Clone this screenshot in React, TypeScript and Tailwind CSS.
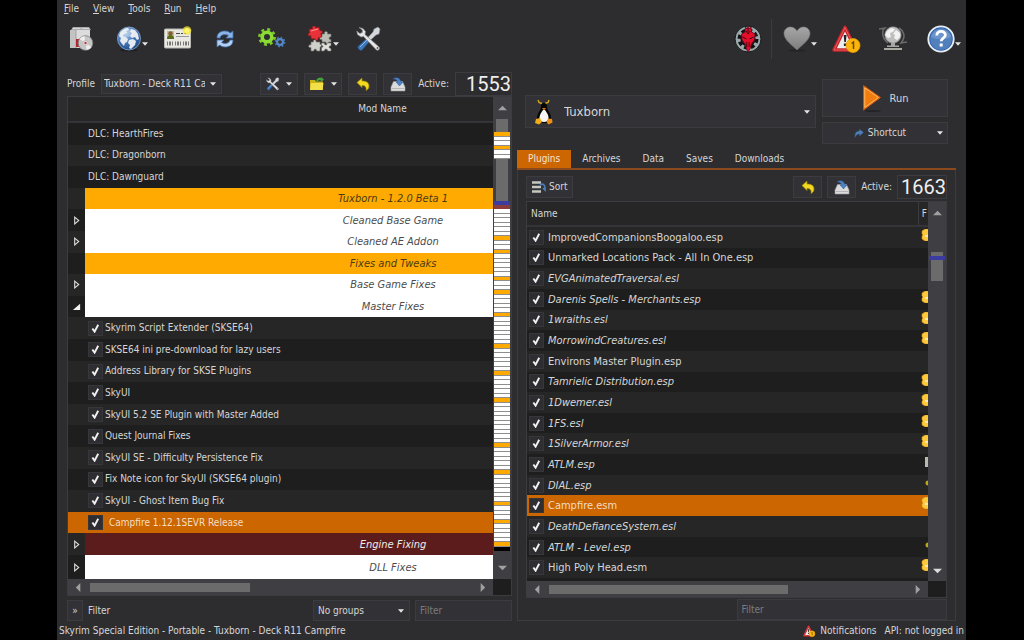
import React from 'react';
import clsx from 'clsx';

type Mod = {
  name: string;
  kind: 'dlc' | 'mod' | 'separator';
  tone?: 'orange' | 'white' | 'red';
  tree?: 'closed' | 'open';
  selected?: boolean;
};

const mods: Mod[] = [
  { name: 'DLC: HearthFires', kind: 'dlc' },
  { name: 'DLC: Dragonborn', kind: 'dlc' },
  { name: 'DLC: Dawnguard', kind: 'dlc' },
  { name: 'Tuxborn - 1.2.0 Beta 1', kind: 'separator', tone: 'orange' },
  { name: 'Cleaned Base Game', kind: 'separator', tone: 'white', tree: 'closed' },
  { name: 'Cleaned AE Addon', kind: 'separator', tone: 'white', tree: 'closed' },
  { name: 'Fixes and Tweaks', kind: 'separator', tone: 'orange' },
  { name: 'Base Game Fixes', kind: 'separator', tone: 'white', tree: 'closed' },
  { name: 'Master Fixes', kind: 'separator', tone: 'white', tree: 'open' },
  { name: 'Skyrim Script Extender (SKSE64)', kind: 'mod' },
  { name: 'SKSE64 ini pre-download for lazy users', kind: 'mod' },
  { name: 'Address Library for SKSE Plugins', kind: 'mod' },
  { name: 'SkyUI', kind: 'mod' },
  { name: 'SkyUI 5.2 SE Plugin with Master Added', kind: 'mod' },
  { name: 'Quest Journal Fixes', kind: 'mod' },
  { name: 'SkyUI SE - Difficulty Persistence Fix', kind: 'mod' },
  { name: 'Fix Note icon for SkyUI (SKSE64 plugin)', kind: 'mod' },
  { name: 'SkyUI - Ghost Item Bug Fix', kind: 'mod' },
  { name: 'Campfire 1.12.1SEVR Release', kind: 'mod', selected: true },
  { name: 'Engine Fixing', kind: 'separator', tone: 'red', tree: 'closed' },
  { name: 'DLL Fixes', kind: 'separator', tone: 'white', tree: 'closed' },
];

type Plugin = { name: string; italic?: boolean; flag?: 'coin' | 'page' | 'dot'; selected?: boolean };

const plugins: Plugin[] = [
  { name: 'ImprovedCompanionsBoogaloo.esp', flag: 'coin' },
  { name: 'Unmarked Locations Pack - All In One.esp' },
  { name: 'EVGAnimatedTraversal.esl', italic: true },
  { name: 'Darenis Spells - Merchants.esp', italic: true, flag: 'coin' },
  { name: '1wraiths.esl', italic: true, flag: 'coin' },
  { name: 'MorrowindCreatures.esl', italic: true, flag: 'coin' },
  { name: 'Environs Master Plugin.esp' },
  { name: 'Tamrielic Distribution.esp', italic: true, flag: 'coin' },
  { name: '1Dwemer.esl', italic: true, flag: 'coin' },
  { name: '1FS.esl', italic: true, flag: 'coin' },
  { name: '1SilverArmor.esl', italic: true, flag: 'coin' },
  { name: 'ATLM.esp', italic: true, flag: 'page' },
  { name: 'DIAL.esp', italic: true, flag: 'dot' },
  { name: 'Campfire.esm', flag: 'coin', selected: true },
  { name: 'DeathDefianceSystem.esl', italic: true },
  { name: 'ATLM - Level.esp', italic: true, flag: 'dot' },
  { name: 'High Poly Head.esm', flag: 'coin' },
];

// separators shown as orange bands in the mod list scrollbar
const orangeBands = [6, 9, 15, 18, 23, 30, 36, 42, 52, 58, 65, 69, 74];

const Caret = ({ className }: { className?: string }) => (
  <svg viewBox="0 0 6 4" className={clsx('h-1 w-1.5 shrink-0 pointer-events-none', className)}>
    <path d="M0 0.3h6L3 3.8z" fill="#e4e4e4" />
  </svg>
);

const Arrow = ({ dir, light }: { dir: 'up' | 'down' | 'left' | 'right'; light?: boolean }) => {
  const d = {
    up: 'M5 2l5 5H0z',
    down: 'M5 8l5-5H0z',
    left: 'M2 5l5-5v10z',
    right: 'M8 5L3 0v10z',
  }[dir];
  return (
    <svg viewBox="0 0 10 10" className="size-[9px]">
      <path d={d} fill={light ? '#dcdcdc' : '#a0a0a0'} />
    </svg>
  );
};

const InstallIcon = () => (
  <svg viewBox="0 0 26 26" className="size-[26px]">
    <path d="M3 4l2-3h16l2 3z" fill="#a9a9a9" />
    <path d="M4.500 2.500h8M14 2.500h7" stroke="#d6d6d6" />
    <path d="M2 4h20v18H2z" fill="#dcdcdc" />
    <path d="M2 4h6v18H2z" fill="#c3c3c3" />
    <path d="M8 4v18" stroke="#8f8f8f" strokeWidth=".7" />
    <path d="M8 13h5v8H8z" fill="#b3242c" />
    <circle cx="17.500" cy="17" r="7.300" fill="#c6c6c6" stroke="#7b7b7b" strokeWidth=".8" />
    <path d="M17.500 17l-6-4a7 7 0 0 1 5-3zM17.500 17l6 4a7 7 0 0 1-5 3z" fill="#ededed" />
    <circle cx="17.500" cy="17" r="2.600" fill="#f0e3e3" stroke="#aaa" strokeWidth=".6" />
    <circle cx="17.500" cy="17" r="1.200" fill="#a83a42" />
  </svg>
);

const GlobeIcon = () => (
  <svg viewBox="0 0 26 26" className="size-[26px]">
    <defs>
      <radialGradient id="sea" cx=".35" cy=".25" r=".8">
        <stop offset="0" stopColor="#a9c8ee" />
        <stop offset=".55" stopColor="#4577b8" />
        <stop offset="1" stopColor="#1f4684" />
      </radialGradient>
    </defs>
    <ellipse cx="13" cy="24" rx="9" ry="1.500" fill="#1e1e20" />
    <circle cx="13" cy="12.500" r="11.500" fill="url(#sea)" stroke="#89a7cf" strokeWidth=".8" />
    <path d="M4 7c2-3 5-5 8-5l1 2-3 1 1 2-3 1-1 2 3 1 2 2-1 3-2 1-1 3c-2-2-3-4-4-5l1-3-2-2zM15 3l4 1 3 4 1 5-2 1-2-3-3 1-2-2 2-3-2-1zM13 14l4-1 3 2-1 4-4 4-2-1 1-3-2-2z" fill="#e4eaf0" />
    <ellipse cx="11" cy="7" rx="7" ry="4" fill="#fff" opacity=".25" />
  </svg>
);

const CardIcon = () => (
  <svg viewBox="0 0 28 26" className="h-[26px] w-7">
    <rect x=".5" y="3" width="26" height="19" rx="1" fill="#e9e8e2" stroke="#b9b9b3" />
    <path d="M3 5h7v8H3z" fill="#b7c29b" />
    <circle cx="6.500" cy="7.500" r="2.200" fill="#8a5a2b" />
    <path d="M3 13c0-3 1.500-4 3.500-4s3.500 1 3.500 4z" fill="#5c6e1b" />
    <path d="M12 7.500h10" stroke="#494949" strokeWidth="1.200" strokeDasharray="4 1 2 1" />
    <path d="M12 10.500h13" stroke="#9a9a9a" />
    <path d="M3 17.500h22" stroke="#777" strokeWidth="4" strokeDasharray="1 1 2 1 1 2" />
    <circle cx="23" cy="4.500" r="4.300" fill="#f5e52a" opacity=".75" />
    <circle cx="23" cy="4.500" r="2.400" fill="#fff56b" />
  </svg>
);

const RefreshIcon = () => (
  <svg viewBox="0 0 18 18" className="size-[18px]">
    <path d="M1 8c0-5 3.500-7 8-7 2.500 0 4 .8 5.200 2L17 1v7h-7l2.400-2.400C10 4 5 4 4 8z" fill="#8ab4e6" stroke="#3e6fb0" strokeWidth=".8" />
    <path d="M17 10c0 5-3.500 7-8 7-2.500 0-4-.8-5.200-2L1 17v-7h7l-2.400 2.400C8 14 13 14 14 10z" fill="#b5d0f0" stroke="#3e6fb0" strokeWidth=".8" />
  </svg>
);

const GearsIcon = () => (
  <svg viewBox="0 0 28 22" className="h-[22px] w-7">
    <circle cx="9" cy="9" r="7.600" fill="none" stroke="#7ecb29" strokeWidth="2.600" strokeDasharray="2.900 3.068" />
    <circle cx="9" cy="9" r="4.800" fill="none" stroke="#8bdc35" strokeWidth="3.600" />
    <circle cx="22" cy="14" r="4.500" fill="none" stroke="#4679b4" strokeWidth="1.800" strokeDasharray="1.700 1.834" />
    <circle cx="22" cy="14" r="2.900" fill="none" stroke="#5487c2" strokeWidth="2.200" />
  </svg>
);

const PuzzleIcon = () => (
  <svg viewBox="0 0 26 26" className="size-[26px]">
    <path
      d="M15 8h2.500c-1-3.500 4-3.500 3 0H24v3c-2.500-1-2.500 3.500 0 2.500V16h-2.500c1 2.500-3.500 2.500-2.500 0H15v-2.500c-3 1-3-3.500 0-2.500z"
      fill="#bdbdb8"
      stroke="#6f6f6a"
      strokeWidth=".6"
    />
    <path
      d="M4 16h2.500c-1-3 3.500-3 2.500 0H13v2.500c2-1 2 3 0 2.500V25H9.500c1-2.500-3.500-2.500-2.500 0H4v-3.500c-3 1-3-3.500 0-2.500z"
      fill="#d0d0cb"
      stroke="#6f6f6a"
      strokeWidth=".6"
    />
    <path
      d="M14.500 17h3c-1 2.500 3.500 2.500 2.500 0h4v3c-2.500-1-2.500 3 0 2.500V25h-3.500c1-2.500-4-2.500-3 0h-3v-3.500c2 0 2-2.500 0-2z"
      fill="#e0e0dc"
      stroke="#6f6f6a"
      strokeWidth=".6"
    />
    <path
      d="M2 3.500l3.500-.8C4.500-.5 9-1 8.500 2l3.500-.8 1 3.800c2.500-1.500 3.500 2.500.8 2.500l.7 3.500-3.500.8c1 3-3.500 3.500-3 .8L4.500 13l-.8-3.500C1 11 .2 7 2.800 7z"
      fill="#e8323a"
      stroke="#a3141b"
      strokeWidth=".7"
    />
    <path d="M4 5l7-2" stroke="#ff9494" />
  </svg>
);

const ToolsIcon = ({ className }: { className: string }) => (
  <svg viewBox="0 0 26 26" className={className}>
    <path d="M24 3l-2-2-4 2-1 3-6.500 7 2.500 2.500L20 9l3-1z" fill="#d4d8dc" stroke="#858a90" strokeWidth=".6" />
    <path d="M10 13l3 3-7 8c-1 1.500-5-1.500-4-3.500z" fill="#3f78bd" stroke="#25558f" strokeWidth=".7" />
    <path d="M4 21l7-7" stroke="#8fb7e6" />
    <path d="M3 1.500l4 1 2.500 3-.5 3L23 21c1.500 2-1 4-2.500 3L7.500 10.500 5 11 1.500 8.500.8 5l3 2.500 2.500-1V4z" fill="#e6e6e6" stroke="#8a8a8a" strokeWidth=".7" />
    <circle cx="21.500" cy="22" r=".9" fill="#555" />
  </svg>
);

const SkyrimIcon = () => (
  <svg viewBox="0 0 28 28" className="size-7">
    <circle cx="14" cy="14" r="13" fill="#9ba9ab" stroke="#1a1a1a" />
    <circle cx="14" cy="14" r="8.600" fill="none" stroke="#111" strokeWidth="3.800" strokeDasharray="3.800 2.954" />
    <circle cx="14" cy="14" r="7.600" fill="#151515" />
    <path d="M14 1l1.500 3 1.500-2 .5 5 3.500 2-.5 6-3 4-1.500 5L14 27l-1.500-3-1.500-5-3-4-.5-6L11 7l.5-5L12.500 4z" fill="#e60f2b" stroke="#5c0a24" strokeWidth=".8" />
    <path d="M14 3v4M12 6l2 3 2-3M8.500 12l4 2M19.500 12l-4 2M12.800 17v5M15.200 17v5" stroke="#2d060c" strokeWidth=".9" fill="none" />
  </svg>
);

const HeartIcon = () => (
  <svg viewBox="0 0 28 26" className="h-[26px] w-7">
    <defs>
      <linearGradient id="heart" x1="0" y1="0" x2="0" y2="1">
        <stop offset="0" stopColor="#a6a6a6" />
        <stop offset="1" stopColor="#7e7e7e" />
      </linearGradient>
    </defs>
    <ellipse cx="14" cy="24.500" rx="9" ry="1.200" fill="#232325" />
    <path d="M14 24C9 19 1 14 1 7.500 1 3.500 4 1 7.500 1 10.500 1 13 3 14 5c1-2 3.500-4 6.500-4C24 1 27 3.500 27 7.500 27 14 19 19 14 24z" fill="url(#heart)" stroke="#777" strokeWidth=".6" />
  </svg>
);

const WarningIcon = ({ className }: { className: string }) => (
  <svg viewBox="0 0 30 28" className={className}>
    <path d="M14 2.500L25 25H3z" fill="#ececec" stroke="#c5242a" strokeWidth="3.600" strokeLinejoin="round" />
    <path d="M14 2.500L25 25H3z" fill="none" stroke="#ec6a6a" strokeWidth=".8" strokeLinejoin="round" />
    <path d="M12.700 10h2.800l-.6 7h-1.600zM12.900 18.500h2.400v2.400h-2.400z" fill="#222" />
    <circle cx="22" cy="20.500" r="7" fill="#fdb40c" stroke="#e89a00" strokeWidth=".8" />
    <path d="M20.500 18.500l2-1.500v7" stroke="#6b4a00" strokeWidth="1.500" fill="none" />
  </svg>
);

const GreyGlobeIcon = () => (
  <svg viewBox="0 0 28 26" className="h-[26px] w-7">
    <path d="M0 3l6-1-2 2c-1 5 1 10 5 13M28 16l-6 1 2-3c2-4 1-9-4-12" fill="none" stroke="#6c6c6c" strokeWidth="1.500" />
    <circle cx="14" cy="9" r="8.200" fill="#bdbdbd" stroke="#8c8c8c" strokeWidth=".6" />
    <path d="M8 5l4-3 4 1-2 3-3 1 1 4-3 1-3-3zM17 4l4 3v4l-3 3-3-2 1-3-2-1z" fill="#f2f2f2" />
    <path d="M12 17h4v3h-4z" fill="#a5a5a5" />
    <path d="M8 19.500h12V21H8zM5 22h18v2H5z" fill="#a9a9a4" />
  </svg>
);

const HelpIcon = () => (
  <svg viewBox="0 0 28 28" className="size-7">
    <circle cx="14" cy="14" r="12.700" fill="#2b62ab" stroke="#e9eef5" strokeWidth="1.800" />
    <circle cx="14" cy="14" r="10.800" fill="#5180bd" />
    <path d="M4 12a10.300 10.300 0 0 1 20 0c-6 3-14 3-20 0z" fill="#7ea2d2" opacity=".6" />
    <path d="M9.800 10.500c0-5.500 8.600-5.200 8.600-.5 0 3-4.200 3.200-4.200 6.200" fill="none" stroke="#fff" strokeWidth="2.800" />
    <path d="M12.700 18.500h3v3h-3z" fill="#fff" />
  </svg>
);

const FolderIcon = () => (
  <svg viewBox="0 0 16 14" className="h-3.5 w-4">
    <path d="M1 3h5l1 1.500h7V13H1z" fill="#c9b316" />
    <path d="M2 6h12.500l-1 7H1z" fill="#f1e04a" />
    <path d="M7 4c1-3 3-3.500 5-3V0l3 2.500L12 5V3.500C10 3 9 3.500 8.500 5z" fill="#3fa53c" />
  </svg>
);

const UndoIcon = () => (
  <svg viewBox="0 0 14 14" className="size-3.5">
    <path d="M1 5.500L6 1v3c5 0 7 2 7 5 0 2-1 3.500-3 4.500.6-3-.5-5-4-5v2z" fill="#f2d821" stroke="#9d8800" strokeWidth=".7" />
  </svg>
);

const BackupIcon = () => (
  <svg viewBox="0 0 16 16" className="size-4">
    <path d="M3.500 5.500h9L15 11v4H1v-4z" fill="#dcdcdc" stroke="#9a9a9a" strokeWidth=".6" />
    <path d="M2 12.500h12" stroke="#b5b5b5" />
    <path d="M3 3c3-2.500 7-1.500 8 3h2l-3.500 4L6 6h2C7 3.500 5 3 3 3z" fill="#4d82c4" stroke="#2f5f9e" strokeWidth=".5" />
  </svg>
);

const SortIcon = () => (
  <svg viewBox="0 0 16 14" className="h-3.5 w-4">
    <path d="M1 2.500h9M1 7h9M1 11.500h9" stroke="#c4c8c0" strokeWidth="2.400" />
    <path d="M9 5c3-2 5 0 5 3v2l-2-2" stroke="#4d7fbe" strokeWidth="1.600" fill="none" />
  </svg>
);

const TuxIcon = () => (
  <svg viewBox="0 0 18 26" className="h-[26px] w-[18px] shrink-0">
    <path d="M3 1l1 2.500 3 1M14 1l-1 2.500-3 1" stroke="#d8a714" strokeWidth="1.400" fill="none" />
    <path d="M6 7c0-4 6-4 6 0 0 5 4 7 4 12 0 3-2 5-7 5s-7-2-7-5c0-5 4-7 4-12z" fill="#050505" />
    <path d="M8 11h2c3 4 3.500 6 3.500 8S12 23 9 23s-4.500-2-4.500-4S5 15 8 11z" fill="#f6f6f6" />
    <path d="M7 9h4l-2 2.500z" fill="#e8750c" />
    <path d="M1 20l4-1 2 4-3 2.500L0 24z" fill="#f3ad17" />
    <path d="M17 20l-4-.5-1.500 3.500 2 2.500 4-2z" fill="#ee8f14" />
  </svg>
);

const RunIcon = () => (
  <svg viewBox="0 0 20 28" className="h-7 w-5">
    <ellipse cx="11" cy="27" rx="8" ry="1" fill="#242427" />
    <path d="M1.500 1.500L18.500 13.500 1.500 26z" fill="#f07d10" stroke="#c9530a" strokeLinejoin="round" />
    <path d="M2.800 4L16.500 13.500 2.800 23.500z" fill="none" stroke="#ffb766" />
  </svg>
);

const ShortcutIcon = () => (
  <svg viewBox="0 0 10 10" className="size-2.5">
    <path d="M1 9.500C.5 5 2.500 3 5.500 3V1L9.500 4.500 5.500 8V6C3.500 6 2 7 1 9.500z" fill="#4f7fb5" stroke="#2d5688" strokeWidth=".5" />
  </svg>
);

const ToolButton = ({ label, menu, children }: { label: string; menu?: boolean; children: React.ReactNode }) => (
  <button aria-label={label} className={clsx('flex h-full items-center justify-center', menu ? 'w-[50px] pl-1.5' : 'w-[47px]')}>
    {children}
    {menu && <Caret className="mt-2.5" />}
  </button>
);

const SmallButton = ({ label, menu, children }: { label: string; menu?: boolean; children: React.ReactNode }) => (
  <button
    aria-label={label}
    className={clsx(
      'flex h-[22px] items-center justify-center gap-1.5 border border-[#3b3b40] bg-[#323236]',
      menu ? 'w-[38px]' : 'w-[29px]',
    )}
  >
    {children}
    {menu && <Caret />}
  </button>
);

// four digit counter next to "Active:"
const Counter = ({ value, label, className }: { value: number; label: string; className: string }) => (
  <output
    aria-label={label}
    className={clsx(
      'flex h-6 items-center justify-end border border-[#3b3b40] bg-[#2d2d30] font-[Roboto,sans-serif] text-[20px] leading-none text-[#efefef]',
      className,
    )}
  >
    {value}
  </output>
);

const Check = ({ label }: { label: string }) => (
  <span className="grid size-[15px] shrink-0 place-items-center">
    <input
      type="checkbox"
      aria-label={label}
      defaultChecked
      className="peer col-start-1 row-start-1 size-[15px] appearance-none border border-[#37373b] bg-[#2e2e32]"
    />
    <svg viewBox="0 0 10 10" className="pointer-events-none col-start-1 row-start-1 hidden size-[9px] peer-checked:block">
      <path d="M1.500 5l2.500 3.500L8 .8" fill="none" stroke="#f2f2f2" strokeWidth="2.100" />
    </svg>
  </span>
);

const TreeArrow = ({ state }: { state: 'closed' | 'open' }) => (
  <svg viewBox="0 0 10 10" className="size-[9px]">
    {state === 'closed' ? (
      <path d="M3 1.200l4.500 3.800L3 8.800z" fill="none" stroke="#e0e0e0" strokeWidth="1.200" />
    ) : (
      <path d="M9 2v7H1z" fill="#f2f2f2" />
    )}
  </svg>
);

const HScroll = ({ size }: { size: string }) => (
  <div className="flex h-4 items-center bg-[#3f3f43]">
    <div className="flex flex-1 items-center gap-[7px] px-1.5">
      <Arrow dir="left" />
      <div className="flex-1">
        <div className={clsx('h-[9px] bg-[#6b6b6b]', size)} />
      </div>
      <Arrow dir="right" />
    </div>
    <div className="h-4 w-[18px] bg-[#1e1e1e]" />
  </div>
);

const Band = ({ orange }: { orange?: boolean }) => (
  <div className={clsx('flex-1 border-b border-[#8d8d8d]', orange ? 'bg-[#ffaa00]' : 'bg-white')} />
);

const ModScrollbar = () => (
  <div className="flex w-[18px] flex-col items-center bg-[#3f3f43]">
    <div className="flex h-[22px] items-center"><Arrow dir="up" /></div>
    <div className="h-[13px] w-3 bg-[#6b6b6b]" />
    <div className="flex h-[27px] w-4 flex-col">
      {[true, false, false, true, false, false].map((orange, i) => <Band key={i} orange={orange} />)}
    </div>
    <div className="h-[42px] w-3 bg-[#6b6b6b]" />
    <div className="h-1 w-4 bg-[#3c3ca0]" />
    <div className="h-1 w-4 bg-[#8c3b3b]" />
    <div className="flex w-4 flex-1 flex-col">
      {Array.from({ length: 75 }, (_, i) => <Band key={i} orange={orangeBands.includes(i)} />)}
    </div>
    <div className="h-1 w-4 bg-black" />
    <div className="flex h-7 items-center pt-1"><Arrow dir="down" /></div>
  </div>
);

const ModRow = ({ mod, index }: { mod: Mod; index: number }) => (
  <tr
    className={clsx(
      'flex min-h-0 items-stretch',
      mod.selected ? 'bg-[#cc6600] text-[#f3dcc4]' : index % 2 ? 'bg-[#262626]' : 'bg-[#1e1e1e]',
    )}
  >
    {mod.kind === 'separator' ? (
      <>
        <td className="flex w-[17px] items-center justify-center">{mod.tree && <TreeArrow state={mod.tree} />}</td>
        <td
          className={clsx(
            'flex flex-1 items-center justify-center pl-52 text-[11px] italic',
            mod.tone === 'orange' && 'bg-[#ffaa00] text-[#4a3a14]',
            mod.tone === 'white' && 'bg-white text-[#4c4c4c]',
            mod.tone === 'red' && 'bg-[#5c1c1c] text-[#ececec]',
          )}
        >
          {mod.name}
        </td>
      </>
    ) : (
      <td className={clsx('flex flex-1 items-center pl-5', mod.selected ? 'gap-1.5' : 'gap-0.5')}>
        {mod.kind === 'mod' && <Check label={mod.name} />}
        {mod.name}
      </td>
    )}
  </tr>
);

const Flag = ({ kind }: { kind: 'coin' | 'page' | 'dot' }) => (
  <svg viewBox="0 0 12 12" className="h-3 w-3 shrink-0">
    {kind === 'coin' && <path d="M6 0h6v12H6L3 10V7l1-1-1-1V2z" fill="#ffc93c" stroke="#c98c15" strokeWidth=".6" />}
    {kind === 'coin' && <path d="M6 6h6v2H6z" fill="#f8e6b8" />}
    {kind === 'page' && <path d="M6 1h6v10H6z" fill="#b9b9b4" />}
    {kind === 'dot' && <circle cx="9" cy="6" r="2.500" fill="#b8a81a" />}
  </svg>
);

const PluginRow = ({ plugin, index }: { plugin: Plugin; index: number }) => (
  <tr
    className={clsx(
      'flex min-h-0 items-stretch',
      plugin.selected ? 'bg-[#cc6600] text-[#f3dcc4]' : index % 2 ? 'bg-[#1e1e1e]' : 'bg-[#262626]',
    )}
  >
    <td className={clsx('flex flex-1 items-center gap-1 pl-0.5', plugin.italic && 'italic')}>
      <Check label={plugin.name} />
      {plugin.name}
    </td>
    <td className="flex w-[9px] overflow-hidden pt-0.5">{plugin.flag && <Flag kind={plugin.flag} />}</td>
  </tr>
);

const ModPane = () => (
  <section className="flex min-h-0 flex-col pt-[13px]">
    <div className="flex h-6 items-center gap-1.5">
      <label htmlFor="profile">Profile</label>
      <div className="flex flex-1">
        <div className="relative flex items-center">
          <select id="profile" className="h-5 w-[121px] appearance-none border border-[#3b3b40] bg-[#323236] pl-0.5 pr-4">
            <option>Tuxborn - Deck R11 Campfire</option>
          </select>
          <Caret className="absolute right-1.5" />
        </div>
      </div>
      <SmallButton label="Mod list options" menu><ToolsIcon className="size-3.5" /></SmallButton>
      <SmallButton label="Open folder" menu><FolderIcon /></SmallButton>
      <SmallButton label="Restore mod list"><UndoIcon /></SmallButton>
      <SmallButton label="Back up mod list"><BackupIcon /></SmallButton>
      <span>Active:</span>
      <Counter value={1553} label="Active mods" className="w-[57px]" />
    </div>

    <div className="flex min-h-0 flex-1 flex-col border border-[#3b3b40]">
      <div className="flex min-h-0 flex-1">
        <table className="flex flex-1 flex-col">
          <thead className="flex h-[26px] border-b-2 border-[#343438] bg-[#262626]">
            <tr className="flex flex-1">
              <th className="flex flex-1 items-center justify-center pl-51 font-normal">Mod Name</th>
            </tr>
          </thead>
          <tbody className="grid min-h-0 flex-1 grid-rows-[repeat(20,minmax(0,9fr))_minmax(0,10fr)]">
            {mods.map((mod, i) => <ModRow key={mod.name} mod={mod} index={i} />)}
          </tbody>
        </table>
        <ModScrollbar />
      </div>
      <HScroll size="w-[42%]" />
    </div>

    <div className="mt-1 flex h-[21px] items-stretch gap-[5px]">
      <button aria-label="Show filters" className="w-4 border border-[#3b3b40] bg-[#323236]">»</button>
      <label htmlFor="mod-filter" className="flex flex-1 items-center">Filter</label>
      <div className="relative flex items-center">
        <select aria-label="Groups" className="h-full w-[97px] appearance-none border border-[#3b3b40] bg-[#323236] pl-1">
          <option>No groups</option>
        </select>
        <Caret className="absolute right-1.5" />
      </div>
      <input
        id="mod-filter"
        placeholder="Filter"
        className="w-[97px] border border-[#3b3b40] bg-[#323236] px-1 placeholder:text-[#7c7c7c]"
      />
    </div>
  </section>
);

const tabs = ['Plugins', 'Archives', 'Data', 'Saves', 'Downloads'];

const PluginPane = () => (
  <section className="flex min-h-0 flex-col pt-5">
    <div className="flex items-center gap-1.5 px-2">
      <div className="relative flex flex-1 items-center">
        <span className="absolute left-2.5"><TuxIcon /></span>
        <select
          aria-label="Executable"
          className="h-[33px] w-full appearance-none border border-[#3b3b40] bg-[#323236] pl-9.5 text-[13px]"
        >
          <option>Tuxborn</option>
        </select>
        <Caret className="absolute right-1.5" />
      </div>
      <div className="flex w-[126px] flex-col gap-[5px]">
        <button className="flex h-[38px] items-center justify-center gap-2 border border-[#3b3b40] bg-[#323236] text-[11px]">
          <RunIcon />
          Run
        </button>
        <button className="flex h-[22px] items-center border border-[#3b3b40] bg-[#323236] pr-1">
          <span className="flex flex-1 items-center justify-center gap-1">
            <ShortcutIcon />
            Shortcut
          </span>
          <Caret />
        </button>
      </div>
    </div>

    <div role="tablist" className="mt-1.5 flex h-5 border-b-2 border-[#8a4a1e]">
      {tabs.map((tab, i) => (
        <button
          key={tab}
          role="tab"
          aria-selected={i === 0}
          className={clsx('flex items-center px-[11px]', i === 0 && 'bg-[#cc6600] text-[#f6e3d0]')}
        >
          {tab}
        </button>
      ))}
    </div>

    <div className="flex min-h-0 flex-1 flex-col border-x border-b border-[#3b3b40] px-2 pt-[5px]">
      <div className="flex h-6 items-center gap-[5px]">
        <div className="flex flex-1">
          <button className="flex h-[22px] w-[47px] items-center gap-0.5 border border-[#3b3b40] bg-[#323236] px-1">
            <SortIcon />
            Sort
          </button>
        </div>
        <SmallButton label="Restore load order"><UndoIcon /></SmallButton>
        <SmallButton label="Back up load order"><BackupIcon /></SmallButton>
        <span>Active:</span>
        <Counter value={1663} label="Active plugins" className="w-[50px]" />
      </div>

      <div className="mt-0.5 flex min-h-0 flex-1 flex-col border border-[#3b3b40]">
        <div className="flex min-h-0 flex-1">
          <table className="flex flex-1 flex-col">
            <thead className="flex h-[25px] border-b-2 border-[#343438] bg-[#262626]">
              <tr className="flex flex-1">
                <th className="flex flex-1 items-center border-r border-[#3b3b40] px-1 font-normal">Name</th>
                <th aria-label="Flags" className="flex w-[9px] items-center justify-end pr-px font-normal">F</th>
              </tr>
            </thead>
            <tbody className="grid min-h-0 flex-1 auto-rows-fr bg-[#1e1e1e] pb-[3px] text-[11px]">
              {plugins.map((plugin, i) => <PluginRow key={plugin.name} plugin={plugin} index={i} />)}
            </tbody>
          </table>
          <div className="flex w-[18px] flex-col items-center bg-[#3f3f43]">
            <div className="flex h-[22px] items-center"><Arrow dir="up" /></div>
            <div className="flex w-4 flex-1 flex-col items-center pt-7">
              <div className="h-1 w-3 bg-[#6b6b6b]" />
              <div className="h-1 w-4 bg-[#3c3ca0]" />
              <div className="h-[21px] w-3 bg-[#6b6b6b]" />
            </div>
            <div className="flex h-[22px] items-center"><Arrow dir="down" light /></div>
          </div>
        </div>
        <HScroll size="w-[67%]" />
      </div>

      <div className="mt-px flex h-[21px] justify-end">
        <input
          aria-label="Plugin filter"
          placeholder="Filter"
          className="w-1/2 border border-[#3b3b40] bg-[#323236] px-1 placeholder:text-[#7c7c7c]"
        />
      </div>
    </div>
  </section>
);

const App: React.FC = () => {
  return (
    <div className="h-screen bg-black pl-[57px] pr-[58px] font-['DejaVu_Sans_Condensed','DejaVu_Sans',sans-serif] text-[10px] leading-none text-[#d6d6d6]">
      <div className="flex h-full flex-col overflow-hidden bg-[#2d2d30]">
        <nav className="flex h-[18px] items-center gap-3.5 px-[7px]">
          {['File', 'View', 'Tools', 'Run', 'Help'].map((item) => (
            <button key={item}>
              <span className="underline">{item[0]}</span>
              {item.slice(1)}
            </button>
          ))}
        </nav>

        <header className="flex h-[41px] items-center justify-between">
          <div className="flex h-full items-center">
            <ToolButton label="Install mod"><InstallIcon /></ToolButton>
            <ToolButton label="Visit Nexus" menu><GlobeIcon /></ToolButton>
            <ToolButton label="Profiles"><CardIcon /></ToolButton>
            <ToolButton label="Refresh"><RefreshIcon /></ToolButton>
            <ToolButton label="Executables"><GearsIcon /></ToolButton>
            <ToolButton label="Tools" menu><PuzzleIcon /></ToolButton>
            <ToolButton label="Settings"><ToolsIcon className="size-[26px]" /></ToolButton>
          </div>
          <div className="flex h-full items-center">
            <ToolButton label="Game"><SkyrimIcon /></ToolButton>
            <div className="h-10 w-px bg-[#3b3b40]" />
            <ToolButton label="Endorse" menu><HeartIcon /></ToolButton>
            <ToolButton label="Problems"><WarningIcon className="h-7 w-[30px]" /></ToolButton>
            <ToolButton label="Update"><GreyGlobeIcon /></ToolButton>
            <ToolButton label="Help" menu><HelpIcon /></ToolButton>
          </div>
        </header>

        <main className="grid min-h-0 flex-1 grid-cols-[445fr_439fr] grid-rows-1 gap-[5px] px-2.5">
          <ModPane />
          <PluginPane />
        </main>

        <footer className="flex h-[19px] items-center gap-2 px-0.5">
          <span className="flex-1">Skyrim Special Edition - Portable - Tuxborn - Deck R11 Campfire</span>
          <button className="flex items-center gap-1">
            <WarningIcon className="h-3 w-3.5" />
            Notifications
          </button>
          <span>API: not logged in</span>
        </footer>
      </div>
    </div>
  );
};

export default App;
